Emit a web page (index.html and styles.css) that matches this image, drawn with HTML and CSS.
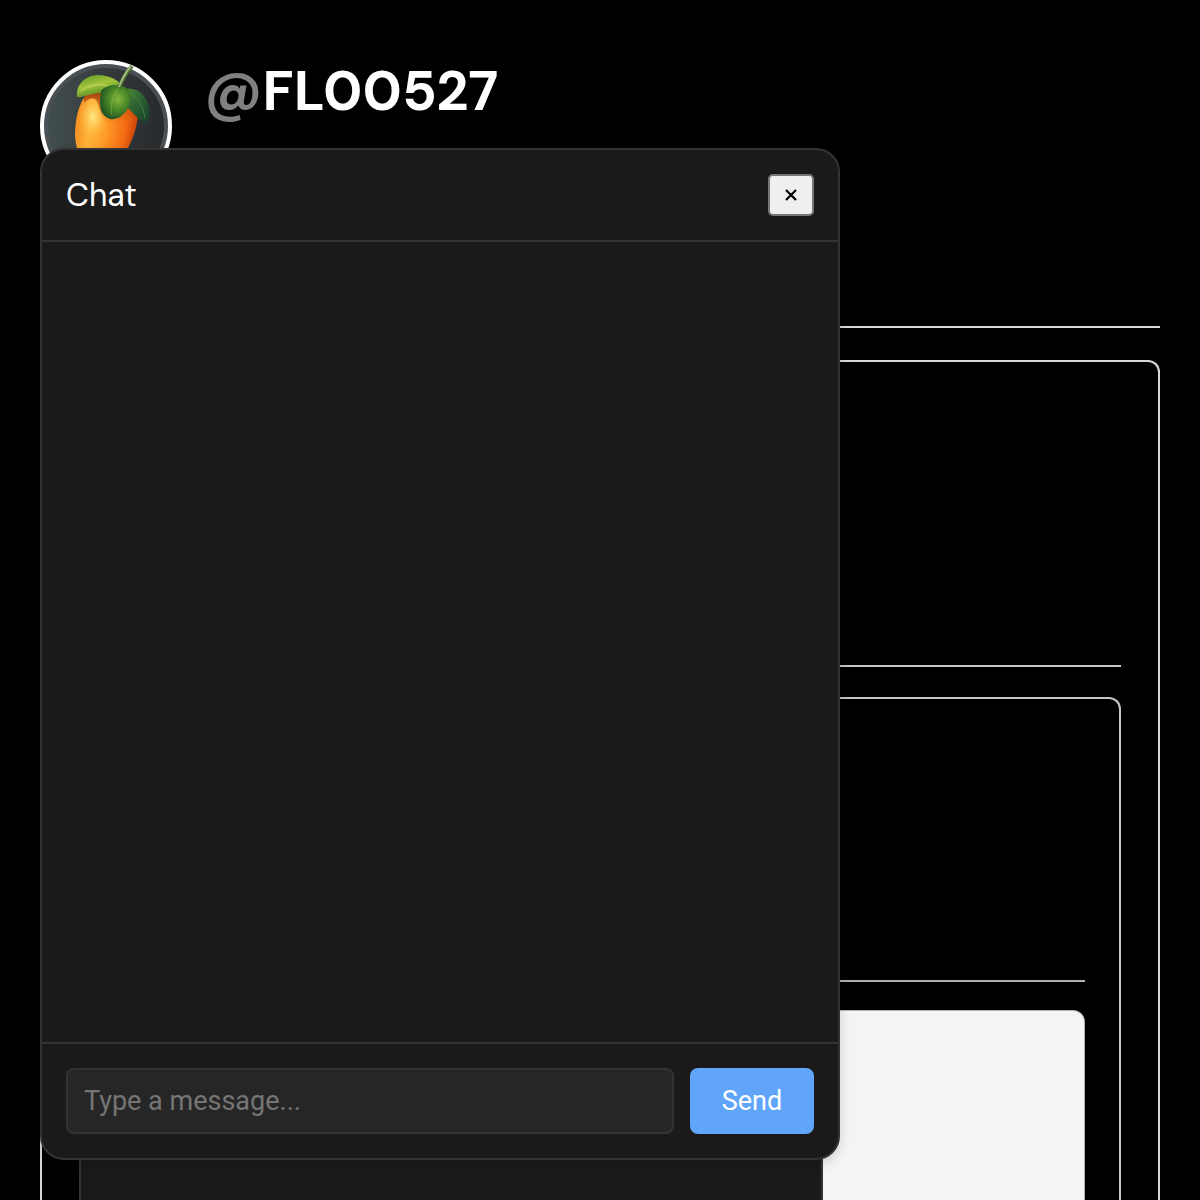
FILE: index.html
```
<!DOCTYPE html>
<html lang="en">
<head>
<meta charset="UTF-8">
<meta name="viewport" content="width=device-width, initial-scale=1">
<title>@FL00527</title>
<link rel="stylesheet" href="styles.css">
</head>
<body>
<main class="page">
    <header class="profile">
        <svg class="avatar" viewBox="0 0 132 132" aria-hidden="true">
            <defs>
                <linearGradient id="ring" x1="0" y1="0" x2="1" y2="0">
                    <stop offset="0" stop-color="#414e4e"/>
                    <stop offset="0.5" stop-color="#34393c"/>
                    <stop offset="1" stop-color="#282b2e"/>
                </linearGradient>
                <linearGradient id="fruit" x1="0" y1="0.3" x2="1" y2="0.5">
                    <stop offset="0" stop-color="#f58a1e"/>
                    <stop offset="0.25" stop-color="#ffb43a"/>
                    <stop offset="0.5" stop-color="#ff9c28"/>
                    <stop offset="0.8" stop-color="#f26a12"/>
                    <stop offset="1" stop-color="#c23c06"/>
                </linearGradient>
                <radialGradient id="shine">
                    <stop offset="0" stop-color="#ffe985"/>
                    <stop offset="1" stop-color="#ffc040" stop-opacity="0"/>
                </radialGradient>
                <linearGradient id="shade" x1="0" y1="0" x2="0" y2="1">
                    <stop offset="0" stop-color="#8f2703"/>
                    <stop offset="1" stop-color="#c84a08" stop-opacity="0"/>
                </linearGradient>
                <linearGradient id="leaf" x1="0" y1="0" x2="0.5" y2="1">
                    <stop offset="0" stop-color="#5c9424"/>
                    <stop offset="0.5" stop-color="#a2c43c"/>
                    <stop offset="1" stop-color="#4b8320"/>
                </linearGradient>
                <radialGradient id="leaf-mid" cx="0.6" cy="0.42" r="0.62">
                    <stop offset="0" stop-color="#84b53c"/>
                    <stop offset="0.5" stop-color="#4b8a28"/>
                    <stop offset="1" stop-color="#1f5422"/>
                </radialGradient>
                <linearGradient id="leaf-dark" x1="0" y1="0" x2="1" y2="1">
                    <stop offset="0" stop-color="#4f8a30"/>
                    <stop offset="0.5" stop-color="#2c6234"/>
                    <stop offset="1" stop-color="#173f26"/>
                </linearGradient>
            </defs>
            <circle cx="66" cy="66" r="64" fill="#4a5054" stroke="#fff" stroke-width="4"/>
            <circle cx="66" cy="66" r="58" fill="url(#ring)"/>
            <path d="M46 35C38 45 35 60 35 76C37 101 49 116 64 114C80 108 98 76 98 52C94 35 60 26 46 35Z" fill="url(#fruit)"/>
            <ellipse cx="53" cy="57" rx="15" ry="22" fill="url(#shine)"/>
            <path d="M44 37C56 28 84 34 97 50L96 58C86 57 79 67 69 64C60 60 60 45 56 40C52 37 48 39 44 43Z" fill="url(#shade)" opacity="0.8"/>
            <path d="M37 37C36 25 44 16 57 15C70 15 81 20 84 31C76 32 67 30 60 33C51 33 43 38 37 37Z" fill="url(#leaf)"/>
            <path d="M41 31C52 23 65 23 78 30" fill="none" stroke="#c1d95c" stroke-width="2" opacity="0.6"/>
            <path d="M84 29C92 27 101 30 106 39C111 48 110 59 106 62C100 62 97 57 91 51C85 46 81 38 84 29Z" fill="url(#leaf-dark)"/>
            <path d="M88 32C98 36 103 46 105 58" fill="none" stroke="#5f9855" stroke-width="1" opacity="0.6"/>
            <path d="M61 31C65 25 77 23 85 27C92 32 91 43 87 50C82 57 76 60 70 59C60 56 60 46 60 40Z" fill="url(#leaf-mid)"/>
            <path d="M78 29C72 36 70 47 72 56" fill="none" stroke="#a0c653" stroke-width="1" opacity="0.45"/>
            <path d="M79 28C82 20 85 14 92 6" fill="none" stroke="#456e2a" stroke-width="4"/>
            <path d="M79 27C82 19 85 13 91 6" fill="none" stroke="#a5b984" stroke-width="2"/>
        </svg>
        <h1 class="username"><span class="at">@</span>FL00527</h1>
    </header>

    <!-- page preview, nested two levels down -->
    <section class="frame">
        <div class="bar"></div>
        <div class="frame frame-inner">
            <div class="bar"></div>
            <div class="frame blank"></div>
        </div>
        <div class="mini-chat"></div>
    </section>

    <section class="chat" aria-labelledby="chat-title">
        <div class="chat-header">
            <h2 class="chat-title" id="chat-title">Chat</h2>
            <button class="close" type="button" aria-label="Close">
                <svg width="12" height="12" viewBox="0 0 12 12"><path d="M1 1L11 11M11 1L1 11" stroke="#000" stroke-width="2.2"/></svg>
            </button>
        </div>
        <div class="messages"></div>
        <form class="composer" onsubmit="return false">
            <input class="message" type="text" placeholder="Type a message..." aria-label="Message">
            <button class="send" type="submit">Send</button>
        </form>
    </section>
</main>
</body>
</html>
```
FILE: styles.css
```
* {
    box-sizing: border-box;
    margin: 0;
    padding: 0;
}
body {
    background: #000;
    color: #fff;
    font-family: "DM Sans", Inter, sans-serif;
}
.page {
    position: relative;
    display: flex;
    flex-direction: column;
    height: 100vh;
    padding: 60px 40px 0;
    overflow: hidden;
}
.profile {
    display: flex;
    align-items: flex-start;
    gap: 32px;
    flex: none;
    height: 268px;
    margin-bottom: 32px;
    border-bottom: 2px solid #d8d8d8;
}
.avatar {
    width: 132px;
    height: 132px;
}
.username {
    font-size: 56px;
    line-height: 62px;
    font-weight: 700;
}
.at {
    color: #808080;
}

/* nested frames */
.frame {
    position: relative;
    display: flex;
    flex-direction: column;
    flex: 1;
    padding: 0 37px;
    border: 2px solid #d8d8d8;
    border-bottom: 0;
    border-radius: 12px 12px 0 0;
}
.bar {
    flex: none;
    height: 305px;
    margin-bottom: 30px;
    border-bottom: 2px solid #c4c4c4;
}
.frame-inner {
    padding: 0 34px;
    border-color: #c4c4c4;
}
.frame-inner .bar {
    height: 283px;
    margin-bottom: 28px;
    border-color: #b0b0b0;
}
.blank {
    background: #f3f4f6;
    border-color: #b0b0b0;
    border-width: 1px;
}
.mini-chat {
    position: absolute;
    top: 140px;
    bottom: 0;
    left: 37px;
    width: 744px;
    background: #1a1a1a;
    border: 2px solid #333;
    border-bottom: 0;
}

/* chat window */
.chat {
    position: absolute;
    top: 148px;
    bottom: 40px;
    left: 40px;
    display: flex;
    flex-direction: column;
    width: 800px;
    max-width: calc(100% - 80px);
    background: #1a1a1a;
    border: 2px solid #333;
    border-radius: 24px;
    box-shadow: 0 4px 12px rgba(0, 0, 0, 0.15);
}
.chat-header {
    display: flex;
    align-items: center;
    justify-content: space-between;
    padding: 24px;
    border-bottom: 2px solid #333;
}
.chat-title {
    font-size: 32px;
    line-height: 42px;
    font-weight: 400;
}
.close {
    display: flex;
    align-items: center;
    justify-content: center;
    width: 46px;
    height: 42px;
    background: #efefef;
    border: 2px solid #767676;
    border-radius: 5px;
}
.messages {
    flex: 1;
}
.composer {
    display: flex;
    gap: 16px;
    padding: 24px;
    border-top: 2px solid #333;
}
.message,
.send {
    height: 66px;
    border-radius: 8px;
    font-family: Roboto, sans-serif;
    font-size: 27px;
    color: #fff;
}
.message {
    flex: 1;
    min-width: 0;
    padding: 0 16px;
    background: #262626;
    border: 2px solid #333;
}
.message::placeholder {
    color: #757575;
}
.send {
    width: 124px;
    background: #60a5fa;
    border: 0;
}
```
